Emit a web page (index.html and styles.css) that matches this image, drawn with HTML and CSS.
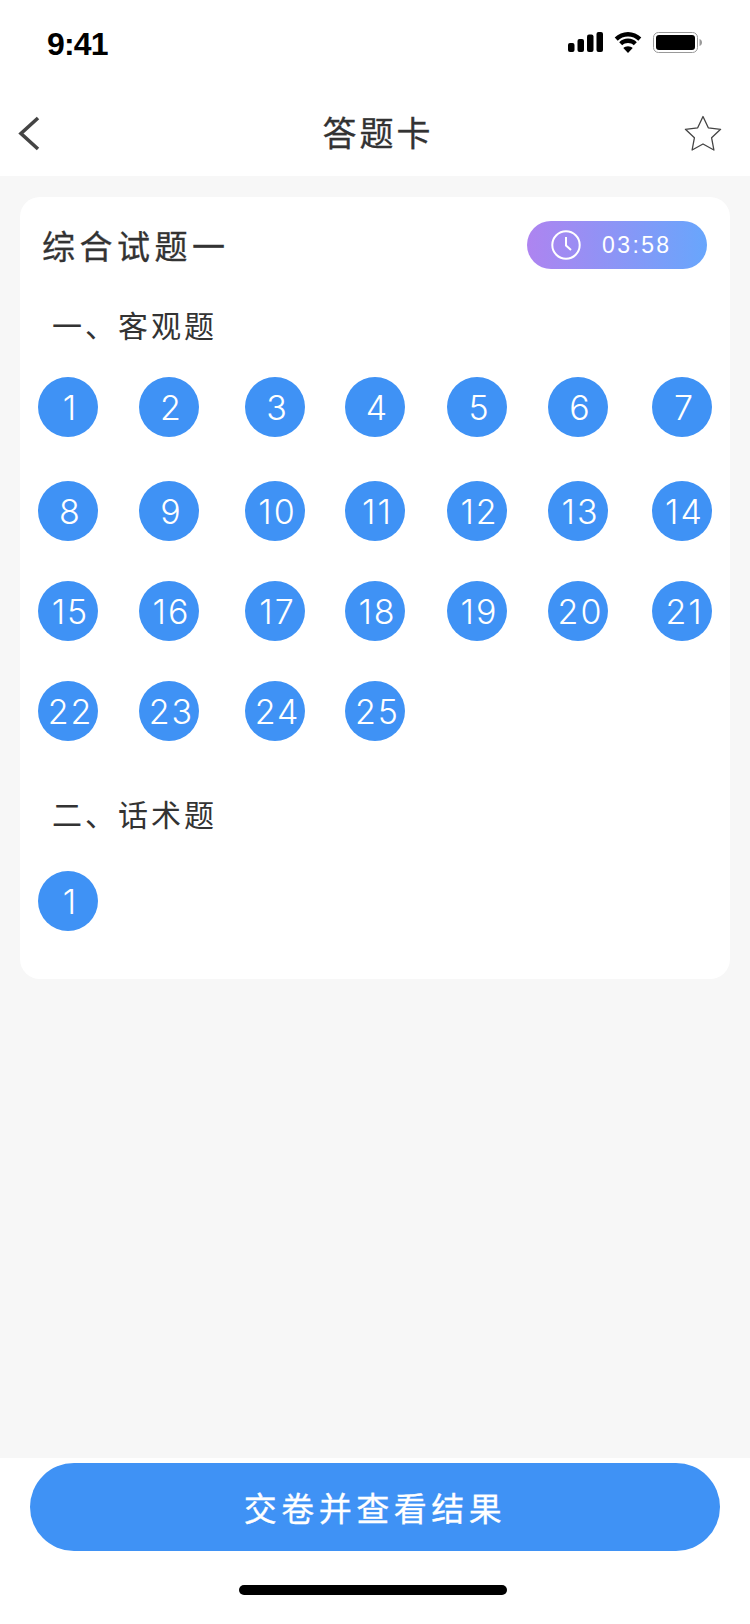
FILE: index.html
```html
<!DOCTYPE html>
<html>
    <head>
        <meta charset="UTF-8">
        <link rel="stylesheet" href="styles.css">
        <title>答题卡</title>
    </head>
    <body>
        <div class="page">
            <div class="status_bar">
                <span class="status_time">9:41</span>
                <div class="status_icons">
                    <svg width="35" height="20" viewBox="0 0 35 20"><g fill="#000"><rect x="0" y="11" width="6.500" height="9" rx="2"/><rect x="9.500" y="7" width="6.500" height="13" rx="2"/><rect x="19" y="2.500" width="6.500" height="17.500" rx="2"/><rect x="28.500" y="0" width="6.500" height="20" rx="2"/></g></svg>
                    <svg width="30" height="21" viewBox="0 0 30 21"><path d="M15 4.500c4 0 7.600 1.600 10.300 4.200l3-3.100C24.800 2.200 20.100 0 15 0S5.200 2.200 1.700 5.600l3 3.100C7.400 6.100 11 4.500 15 4.500z"/><path d="M15 11c2.300 0 4.300.9 5.800 2.300l3-3.100C21.500 8 18.400 6.600 15 6.600S8.500 8 6.200 10.200l3 3.100C10.700 11.900 12.700 11 15 11z"/><path d="M15 21l4.700-5c-1.200-1.100-2.900-1.800-4.700-1.800s-3.500.7-4.700 1.800z"/></svg>
                    <svg width="49" height="21" viewBox="0 0 49 21"><rect x="0.500" y="0.500" width="44" height="20" rx="5" fill="none" stroke="#999"/><rect x="3" y="3" width="39" height="15" rx="3" fill="#000"/><path d="M46.500 7c1.500.4 2.500 1.800 2.500 3.500s-1 3.100-2.500 3.500z" fill="#999"/></svg>
                </div>
            </div>
            <div class="nav_bar">
                <svg class="nav_back" width="22" height="35" viewBox="0 0 22 35"><path d="M20 2L3 17.500 20 33" fill="none" stroke="#444" stroke-width="3.600"/></svg>
                <h1 class="nav_title">答题卡</h1>
                <svg class="nav_star" width="38" height="37" viewBox="0 0 38 37"><path d="M19 1.500l5.300 11.300 12.300 1.500-9 8.500 2.300 12.200L19 29l-10.900 6 2.300-12.200-9-8.500 12.300-1.500z" fill="none" stroke="#444" stroke-width="1.300" stroke-linejoin="round"/></svg>
            </div>
            <div class="content">
                <div class="card">
                    <div class="card_head">
                        <h2 class="card_title">综合试题一</h2>
                        <div class="timer">
                            <svg width="30" height="30" viewBox="0 0 30 30"><circle cx="15" cy="15" r="13.700" fill="none" stroke="#fff" stroke-width="2"/><path d="M15 7v8.500l5 4.500" fill="none" stroke="#fff" stroke-width="2"/></svg>
                            <span class="timer_text">03:58</span>
                        </div>
                    </div>
                    <h3 class="section_title">一、客观题</h3>
                    <div class="num_grid">
                        <span class="num">1</span><span class="num">2</span><span class="num">3</span><span class="num">4</span><span class="num">5</span><span class="num">6</span><span class="num">7</span>
                        <span class="num">8</span><span class="num">9</span><span class="num">10</span><span class="num">11</span><span class="num">12</span><span class="num">13</span><span class="num">14</span>
                        <span class="num">15</span><span class="num">16</span><span class="num">17</span><span class="num">18</span><span class="num">19</span><span class="num">20</span><span class="num">21</span>
                        <span class="num">22</span><span class="num">23</span><span class="num">24</span><span class="num">25</span>
                    </div>
                    <h3 class="section_title section_second">二、话术题</h3>
                    <div class="num_grid num_grid_single">
                        <span class="num">1</span>
                    </div>
                </div>
            </div>
            <div class="footer">
                <button class="submit_btn">交卷并查看结果</button>
                <div class="home_bar"></div>
            </div>
        </div>
    </body>
</html>
```

FILE: styles.css
```css
html, body {
    margin: 0;
    padding: 0;
}
body {
    font-family: "Liberation Sans", "Noto Sans CJK SC", sans-serif;
    background-color: #fff;
    color: #333;
}
h1, h2, h3 {
    margin: 0;
    font-weight: normal;
}
.page {
    width: 750px;
    height: 1624px;
    display: flex;
    flex-direction: column;
}
.status_bar {
    height: 88px;
    display: flex;
    justify-content: space-between;
    align-items: flex-start;
    padding: 0 48px 0 47px;
    box-sizing: border-box;
}
.status_time {
    font-size: 32px;
    font-weight: bold;
    letter-spacing: -0.800px;
    line-height: 37px;
    margin-top: 26px;
    color: #000;
}
.status_icons {
    display: flex;
    gap: 10px;
    margin-top: 32px;
}
.nav_bar {
    height: 88px;
    display: grid;
    grid-template-columns: 1fr auto 1fr;
    align-items: center;
    padding: 3px 18px 0;
    box-sizing: border-box;
}
.nav_title {
    font-size: 34px;
    -webkit-text-stroke: 0.300px #333;
    letter-spacing: 3px;
    line-height: 48px;
    margin-left: 6px;
    color: #333;
}
.nav_star {
    justify-self: end;
    margin-right: 10px;
}
.content {
    flex: 1;
    background-color: #f7f7f7;
    padding: 21px 20px 0;
}
.card {
    background-color: #fff;
    border-radius: 20px;
    height: 782px;
    box-sizing: border-box;
    padding: 24px 18px 0;
}
.card_head {
    display: flex;
    justify-content: space-between;
    align-items: center;
    padding: 0 5px 0 5px;
}
.card_title {
    font-size: 33px;
    -webkit-text-stroke: 0.300px #333;
    letter-spacing: 4.500px;
    line-height: 48px;
    margin: 3px 0 -3px -1px;
    color: #333;
}
.timer {
    width: 180px;
    height: 48px;
    border-radius: 24px;
    background: linear-gradient(90deg, #ae84f0, #68a6fc);
    display: flex;
    align-items: center;
    box-sizing: border-box;
    padding-left: 24px;
    color: #fff;
}
.timer_text {
    font-size: 23px;
    letter-spacing: 2.400px;
    margin-left: 21px;
}
.section_title {
    font-size: 30px;
    letter-spacing: 3px;
    line-height: 44px;
    margin: 36px 0 0 14px;
    color: #333;
}
.section_second {
    margin-top: 53px;
}
.num_grid {
    display: grid;
    grid-template-columns: 101px 106px 100px 102px 101px 104px 60px;
    grid-template-rows: 104px 100px 100px 60px;
    margin-top: 28px;
}
.num_grid_single {
    grid-template-rows: 60px;
    margin-top: 33px;
}
.num {
    width: 60px;
    height: 60px;
    box-sizing: border-box;
    padding-left: 5px;
    border-radius: 50%;
    background-color: #3f92f5;
    color: #fff;
    font-family: Inter, "Liberation Sans", sans-serif;
    font-size: 34px;
    font-weight: 300;
    letter-spacing: 2px;
    display: flex;
    align-items: center;
    justify-content: center;
}
.footer {
    height: 166px;
    box-sizing: border-box;
    padding: 5px 30px 0;
    display: flex;
    flex-direction: column;
    align-items: center;
}
.submit_btn {
    width: 690px;
    height: 88px;
    border: 0;
    border-radius: 44px;
    background-color: #3f92f5;
    color: #fff;
    font-family: inherit;
    font-size: 33px;
    -webkit-text-stroke: 0.300px #fff;
    letter-spacing: 4.500px;
    padding: 0;
}
.home_bar {
    width: 268px;
    height: 10px;
    border-radius: 5px;
    background-color: #000;
    margin: 34px 4px 0 0;
}
```
